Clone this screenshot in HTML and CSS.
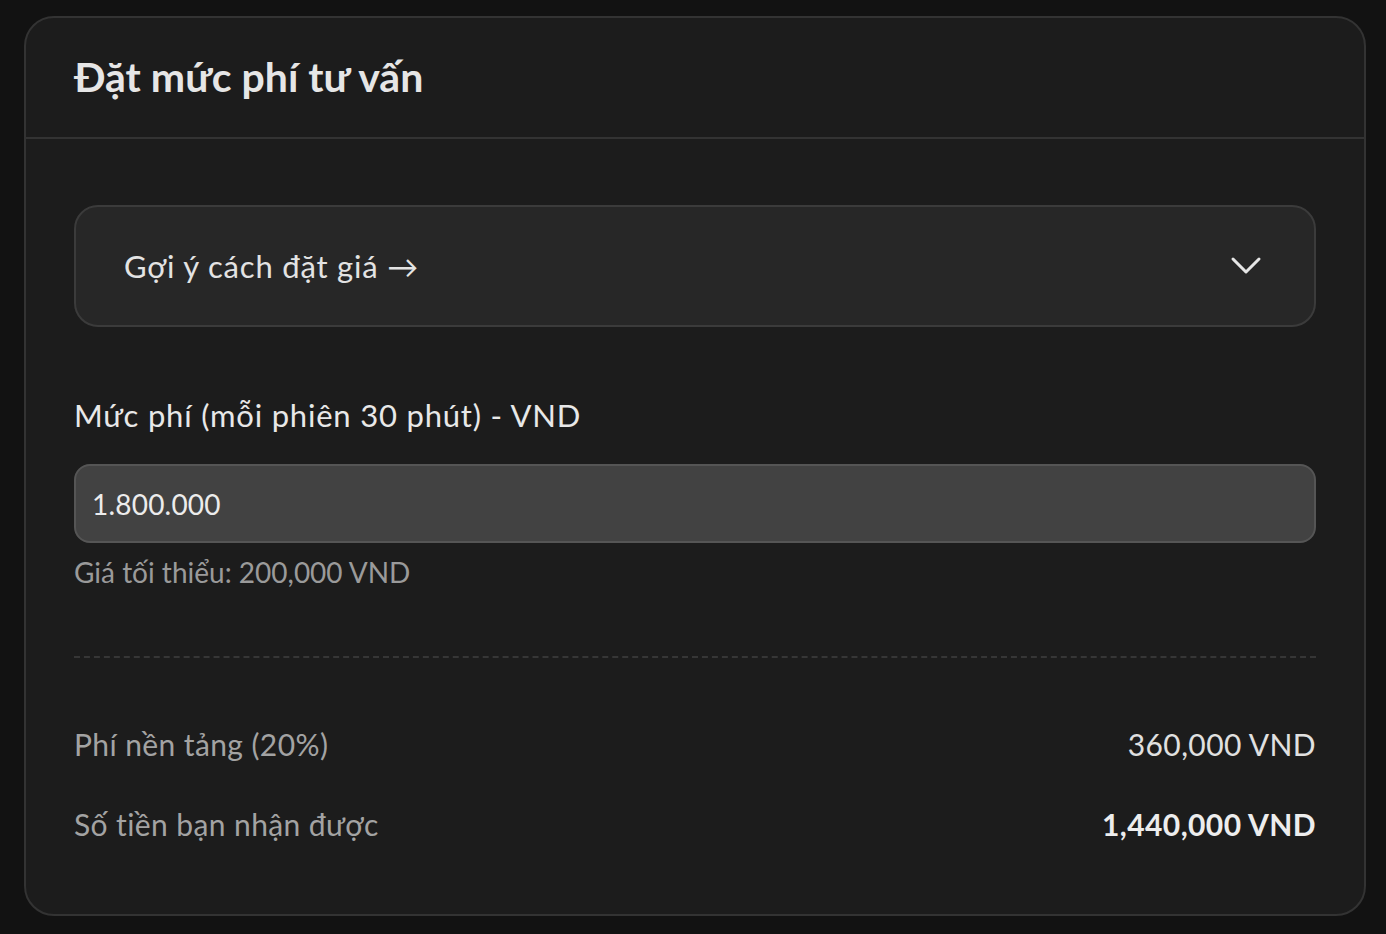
FILE: index.html
```html
<!DOCTYPE html>
<html lang="vi">
<head>
<meta charset="utf-8">
<title>Đặt mức phí tư vấn</title>
<link rel="stylesheet" href="styles.css">
</head>
<body>
<div class="page">
  <section class="card">
    <header class="card-header">
      <h1 class="title">Đặt mức phí tư vấn</h1>
    </header>
    <div class="card-body">
      <div class="hint-box">
        <span class="hint-text">Gợi ý cách đặt giá →</span>
        <svg class="chevron" width="32" height="32" viewBox="0 0 32 32" fill="none">
          <path d="M3 9 L16 22 L29 9" stroke="#e6e6e6" stroke-width="3" stroke-linecap="round" stroke-linejoin="round"/>
        </svg>
      </div>

      <label class="field-label">Mức phí (mỗi phiên 30 phút) - VND</label>
      <div class="input">1.800.000</div>
      <div class="field-note">Giá tối thiểu: 200,000 VND</div>

      <div class="divider"></div>

      <div class="row">
        <span class="row-label">Phí nền tảng (20%)</span>
        <span class="row-value">360,000 VND</span>
      </div>
      <div class="row">
        <span class="row-label">Số tiền bạn nhận được</span>
        <span class="row-value strong">1,440,000 VND</span>
      </div>
    </div>
  </section>
</div>
</body>
</html>
```

FILE: styles.css
```css
* { box-sizing: border-box; }
html, body {
  margin: 0;
  padding: 0;
  background: #121212;
  font-family: Lato, "Noto Sans", "DejaVu Sans", sans-serif;
  color: #e6e6e6;
}
.page {
  padding: 16px 20px 0 24px;
}
.card {
  width: 1342px;
  background: #1c1c1c;
  border: 2px solid #333333;
  border-radius: 30px;
}
.card-header {
  padding: 34px 48px 35px;
  border-bottom: 2px solid #333333;
}
.title {
  margin: 0;
  font-size: 41px;
  line-height: 50px;
  font-weight: 700;
  color: #e6e6e6;
}
.card-body {
  padding: 66px 48px 70px;
  display: flex;
  flex-direction: column;
}
.hint-box {
  height: 122px;
  background: #272727;
  border: 2px solid #3b3b3b;
  border-radius: 24px;
  display: flex;
  align-items: center;
  justify-content: space-between;
  padding: 0 52px 0 48px;
}
.hint-text {
  font-size: 31px;
  letter-spacing: 0.8px;
  color: #e3e3e3;
}
.chevron { display: block; }
.field-label {
  margin-top: 67px;
  font-size: 31px;
  line-height: 42px;
  letter-spacing: 0.8px;
  color: #e8e8e8;
}
.input {
  margin-top: 28px;
  height: 79px;
  background: #424242;
  border: 2px solid #555555;
  border-radius: 16px;
  padding: 0 16px;
  display: flex;
  align-items: center;
  font-size: 28px;
  letter-spacing: 0.2px;
  color: #ececec;
}
.field-note {
  margin-top: 9px;
  font-size: 28px;
  line-height: 40px;
  color: #9a9a9a;
}
.divider {
  margin-top: 64px;
  border-top: 2px dashed #363636;
}
.row {
  display: flex;
  justify-content: space-between;
  align-items: center;
  height: 40px;
  font-size: 30px;
  letter-spacing: 0.4px;
}
.row + .row { margin-top: 40px; }
.divider + .row { margin-top: 66px; }
.row-label { color: #a3a3a3; }
.row-value { color: #e0e0e0; }
.row-value.strong { font-weight: 700; color: #ededed; }
```
